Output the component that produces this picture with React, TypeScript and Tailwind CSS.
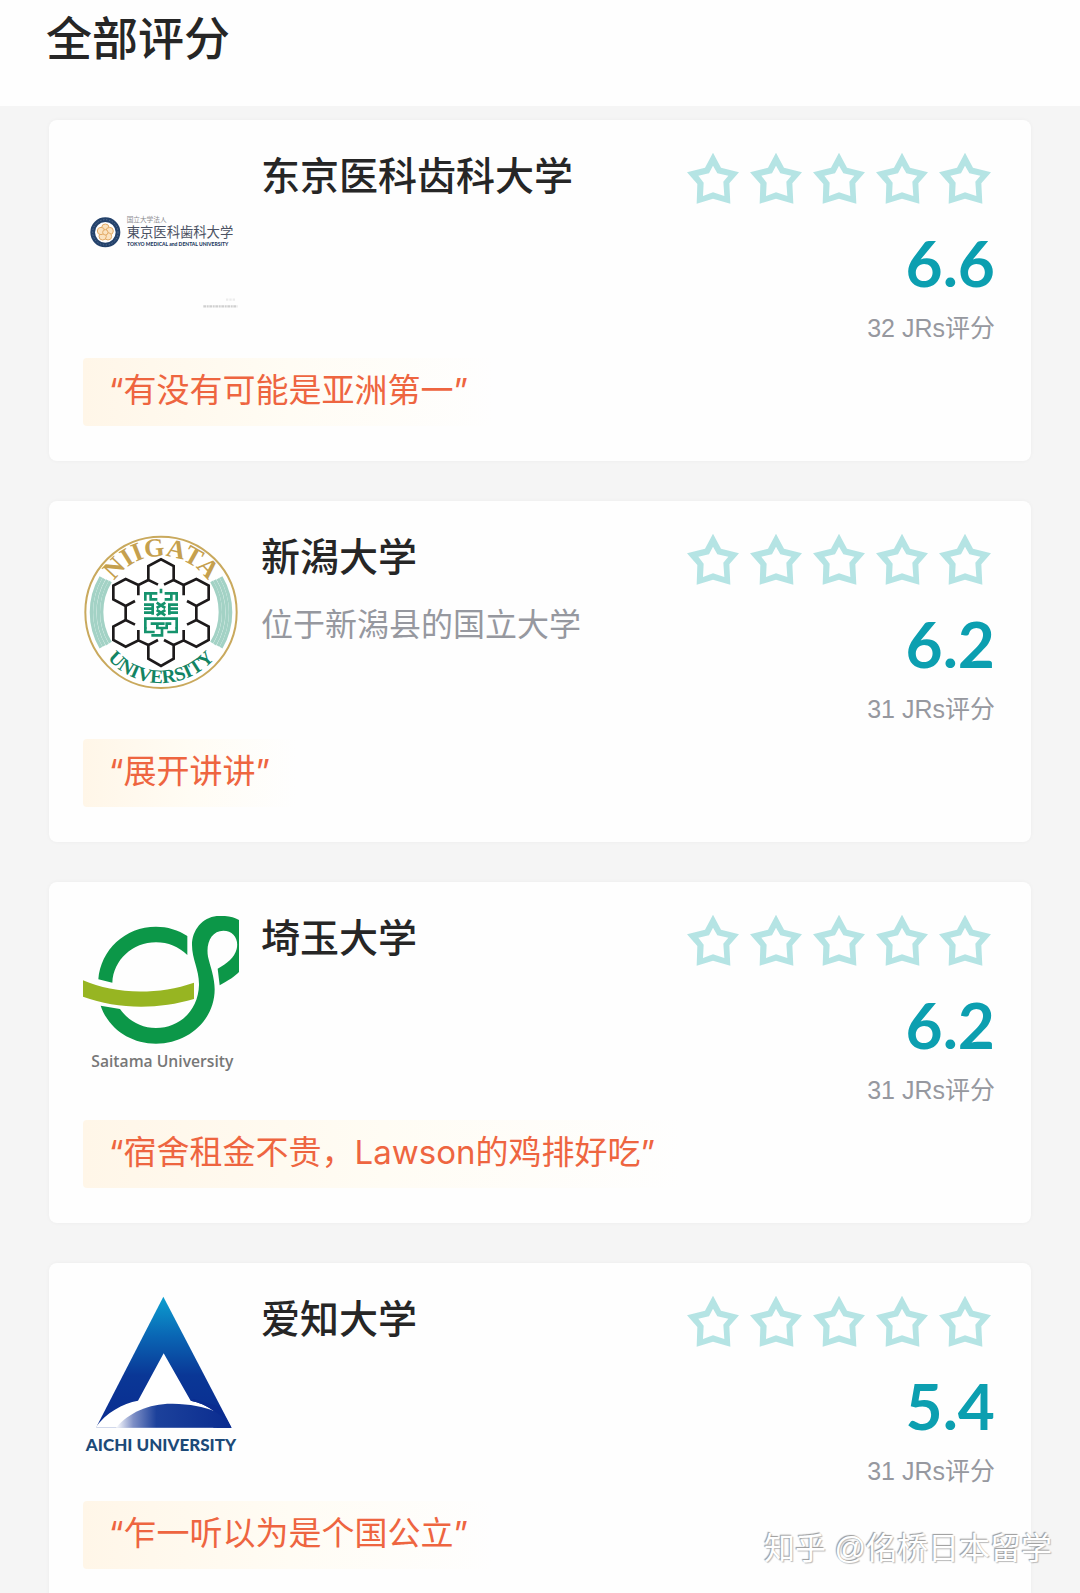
import React from "react";

const CJK = "font-['Liberation_Sans','Noto_Sans_CJK_SC',sans-serif]";

function Star() {
  return (
    <svg viewBox="0 0 156 156" className="size-[52px]" aria-hidden="true">
      <path
        d="M78 2 L102 47 L156 61 L127 94 L130 155 L78 140 L29 155 L31 96 L0 61 L54 47 Z M78 41 L66 64 L34 71 L50 92 L48 132 L78 121 L112 132 L109 89 L124 71 L91 64 Z"
        fill="#b5e4e4"
        fillRule="evenodd"
      />
    </svg>
  );
}

function TokyoMedicalLogo() {
  return (
    <svg viewBox="39 -138 468 468" className="size-full overflow-visible" role="img" aria-label="東京医科歯科大学">
      <circle cx="106" cy="97" r="38" fill="#fff" stroke="#24426b" strokeWidth="14" />
      <circle cx="106" cy="97" r="38" fill="none" stroke="#5a7296" strokeWidth="3" strokeDasharray="4 5" />
      <g fill="#fbe3c0" stroke="#e3ab66" strokeWidth="3">
        <circle cx="106" cy="83" r="11" />
        <circle cx="119" cy="93" r="11" />
        <circle cx="114" cy="109" r="11" />
        <circle cx="98" cy="109" r="11" />
        <circle cx="93" cy="93" r="11" />
        <circle cx="106" cy="97" r="8" />
      </g>
      <text x="170" y="67" fontSize="20" fill="#8c8c90" className="font-['Noto_Sans_CJK_JP',sans-serif]">国立大学法人</text>
      <text x="170" y="110" fontSize="40" fill="#4b5263" className="font-['Noto_Sans_CJK_JP',sans-serif]">東京医科歯科大学</text>
      <text x="171" y="138" fontSize="15" fill="#24395f" className="font-['Lato',sans-serif] font-black">TOKYO MEDICAL and DENTAL UNIVERSITY</text>
      <path d="M468 299 H498" stroke="#ececec" strokeWidth="7" strokeDasharray="7 3" />
      <path d="M400 319 H502" stroke="#cfcfcf" strokeWidth="7" strokeDasharray="9 2 5 2" />
    </svg>
  );
}

function NiigataLogo() {
  return (
    <svg viewBox="39 45 468 468" className="size-full overflow-visible" role="img" aria-label="NIIGATA UNIVERSITY">
      <defs>
        <path id="niigata-top" d="M105 276 A168 168 0 0 1 441 276" />
        <path id="niigata-bottom" d="M60 276 A213 213 0 0 0 486 276" />
      </defs>
      <circle cx="273" cy="277" r="227" fill="#fff" stroke="#c9a95d" strokeWidth="6" />
      <g fill="none" stroke="#a3d2c5">
        <path d="M93 171 A209 209 0 0 0 93 383" strokeWidth="10" />
        <path d="M102 176 A198 198 0 0 0 102 378" strokeWidth="10" />
        <path d="M112 180 A187 187 0 0 0 112 374" strokeWidth="10" />
        <path d="M121 184 A176 176 0 0 0 121 368" strokeWidth="10" />
        <path d="M453 171 A209 209 0 0 1 453 383" strokeWidth="10" />
        <path d="M444 176 A198 198 0 0 1 444 378" strokeWidth="10" />
        <path d="M434 180 A187 187 0 0 1 434 374" strokeWidth="10" />
        <path d="M425 184 A176 176 0 0 1 425 368" strokeWidth="10" />
      </g>
      <text fontSize="78" fill="#c5a04e" textAnchor="middle" className="font-['Liberation_Serif',serif] font-bold">
        <textPath href="#niigata-top" startOffset="50%">NIIGATA</textPath>
      </text>
      <text fontSize="58" fill="#128463" textAnchor="middle" className="font-['Liberation_Serif',serif] font-bold">
        <textPath href="#niigata-bottom" startOffset="50%">UNIVERSITY</textPath>
      </text>
      <g fill="none" stroke="#1d1a1b" strokeWidth="8">
        <path d="M264 194 L235 180 V138 L273 118 L311 138 V180 L282 194" />
        <path d="M235 180 L205 195 V226 M205 195 L167 177 L130 197 V238 L167 258 L195 243" />
        <path d="M311 180 L341 195 V226 M341 195 L379 177 L416 197 V238 L379 258 L351 243" />
        <path d="M167 258 V300 M379 258 V300" />
        <path d="M195 314 L167 300 L130 320 V360 L167 380 L205 361 V330 M205 361 L235 375" />
        <path d="M351 314 L379 300 L416 320 V360 L379 380 L341 361 V330 M341 361 L311 375" />
        <path d="M264 360 L235 375 V416 L273 438 L311 416 V375 L282 360" />
      </g>
      <g fill="none" stroke="#15936d" strokeWidth="8">
        <path d="M273 206 V220 M226 242 V220 H262 M320 242 V220 H284 M242 220 V238 H262 M304 220 V238 H284" />
        <path d="M222 254 H250 M222 266 H250 M222 278 H250 M248 250 V284" />
        <path d="M324 254 H296 M324 266 H296 M324 278 H296 M298 250 V284" />
        <path d="M260 248 L286 264 M286 248 L260 264 M260 270 L286 286 M286 270 L260 286" />
        <path d="M226 326 V296 H320 V326 M242 311 H262 V324 H290 V311 H304 M262 311 H284" />
        <path d="M226 322 V336 H254 M320 322 V336 H292 M276 324 V346 H244" />
      </g>
    </svg>
  );
}

function SaitamaLogo() {
  return (
    <svg viewBox="39 48 468 468" className="size-full" role="img" aria-label="Saitama University">
      <g fill="#0c9748">
        <path d="M352 108 C325 90 292 80 258 80 C165 80 92 150 85 238 L127 248 C130 180 188 127 258 127 C295 127 325 140 352 165 Z" />
        <path d="M92 317 C115 385 180 431 258 431 C355 431 434 360 434 268 C434 232 421 200 414 170 C407 128 425 92 460 92 C490 92 507 117 500 147 C494 172 470 192 443 206 L449 256 C475 242 496 228 507 216 V60 C490 50 465 46 440 48 C398 52 366 90 366 135 C366 178 388 210 387 255 C385 330 330 384 258 384 C213 384 175 362 150 327 Z" />
      </g>
      <path d="M39 241 C130 282 260 287 372 248 V297 C260 330 140 327 39 290 Z" fill="#97b522" />
      <text x="277" y="501" fontSize="47" fill="#777" textAnchor="middle" className="font-['Open_Sans',sans-serif] font-semibold">Saitama University</text>
    </svg>
  );
}

function AichiLogo() {
  return (
    <svg viewBox="39 51 468 468" className="size-full overflow-visible" role="img" aria-label="AICHI UNIVERSITY">
      <defs>
        <linearGradient id="aichi-blue" x1="0" y1="0" x2="0" y2="1">
          <stop offset="0" stopColor="#0c9fd0" />
          <stop offset="0.3" stopColor="#0a66b4" />
          <stop offset="0.6" stopColor="#0a3796" />
          <stop offset="1" stopColor="#0a2c90" />
        </linearGradient>
        <linearGradient id="aichi-globe" x1="0" y1="0" x2="1" y2="0">
          <stop offset="0" stopColor="#fff" />
          <stop offset="0.15" stopColor="#7e8fc6" />
          <stop offset="0.35" stopColor="#1c419b" />
          <stop offset="1" stopColor="#0a2c90" />
        </linearGradient>
      </defs>
      <path d="M280 50 L485 443 H78 Z" fill="url(#aichi-blue)" />
      <path d="M281 220 L204 362 C158 370 108 398 76 443 H440 V398 C415 378 385 366 362 362 Z" fill="#fff" />
      <path d="M362 362 L370 357 L450 380 L484 443 H430 V392 C410 376 385 366 362 362 Z" fill="#0a2c90" />
      <path d="M138 443 C175 398 238 370 308 371 C360 372 402 380 432 393 L470 420 L484 443 Z" fill="url(#aichi-globe)" />
      <text x="273" y="514" fontSize="51" fill="#1c4a78" textAnchor="middle" className="font-['Lato',sans-serif] font-black">AICHI UNIVERSITY</text>
    </svg>
  );
}

type School = {
  name: string;
  note?: string;
  score: string;
  votes: number;
  quote: string;
  Logo: () => React.JSX.Element;
};

const schools: School[] = [
  { name: "东京医科齿科大学", score: "6.6", votes: 32, quote: "有没有可能是亚洲第一", Logo: TokyoMedicalLogo },
  { name: "新潟大学", note: "位于新潟县的国立大学", score: "6.2", votes: 31, quote: "展开讲讲", Logo: NiigataLogo },
  { name: "埼玉大学", score: "6.2", votes: 31, quote: "宿舍租金不贵，Lawson的鸡排好吃", Logo: SaitamaLogo },
  { name: "爱知大学", score: "5.4", votes: 31, quote: "乍一听以为是个国公立", Logo: AichiLogo },
];

function SchoolCard({ name, note, score, votes, quote, Logo }: School) {
  return (
    <li className="rounded-lg bg-[#fefefe] pt-8 pr-9 pb-[35px] pl-[34px] shadow-[0_0_4px_rgba(0,0,0,0.04)]">
      <div className="flex items-start">
        <div className="mt-0.5 size-[156px] shrink-0">
          <Logo />
        </div>
        <div className="ml-[22px] min-w-0 flex-1">
          <h2 className="text-[39px] leading-[50px] font-medium text-[#262626]">{name}</h2>
          {note && <p className="mt-[22px] text-[32px] leading-10 text-[#96989f]">{note}</p>}
        </div>
        <div className="flex flex-col items-end">
          <div className="mr-1 flex gap-[11px]" role="img" aria-label="评分">
            {[1, 2, 3, 4, 5].map((n) => (
              <Star key={n} />
            ))}
          </div>
          <div className="mt-[27px] font-['Lato',sans-serif] text-[64px] leading-[64px] font-bold text-[#0c9fb0]">{score}</div>
          <div className="mt-[17px] text-[25px] leading-8 text-[#96989f]">{votes} JRs评分</div>
        </div>
      </div>
      <p className="mt-3.5 w-fit rounded bg-linear-to-r from-[#fff6e8] via-[#fffcf4] to-[#fefefe] px-[26px] pb-1 font-['Inter','Noto_Sans_CJK_SC',sans-serif] text-[33px] leading-[64px] text-[#ee6540]">
        “{quote}”
      </p>
    </li>
  );
}

export default function App() {
  return (
    <div className={`relative h-screen overflow-hidden bg-[#f5f5f5] ${CJK}`}>
      <header className="bg-[#fefefe] px-[46px] pt-[11px] pb-[39px]">
        <h1 className="text-[46px] leading-[56px] font-medium text-[#262626]">全部评分</h1>
      </header>
      <main className="px-[49px] pt-3.5">
        <ul className="flex flex-col gap-10">
          {schools.map((s) => (
            <SchoolCard key={s.name} {...s} />
          ))}
        </ul>
      </main>
      <div className="absolute right-7 bottom-6 text-[31px] leading-10 text-white [text-shadow:-1px_-1px_1px_#999,1px_1px_1px_#bbb]">
        知乎 @佲桥日本留学
      </div>
    </div>
  );
}
